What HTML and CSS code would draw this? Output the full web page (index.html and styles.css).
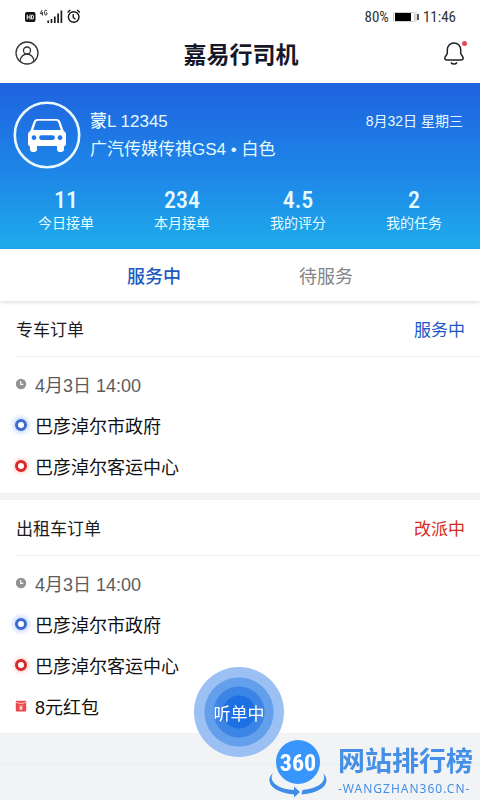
FILE: index.html
```html
<!DOCTYPE html>
<html lang="zh-CN">
<head>
<meta charset="utf-8">
<meta name="viewport" content="width=device-width, initial-scale=1">
<title>嘉易行司机</title>
<link rel="stylesheet" href="styles.css">
</head>
<body>
<svg class="defs" aria-hidden="true">
  <symbol id="clock" viewBox="0 0 12 12"><circle cx="6" cy="6" r="5.2" fill="#929294"/><path d="M5.7 3v3.4h2.6" fill="none" stroke="#fff" stroke-width="1.1"/></symbol>
  <symbol id="packet" viewBox="0 0 12 12"><rect x=".8" y=".8" width="10.400" height="10.700" rx="1" fill="#ea4a4f"/><path d="M1 2.500Q6 4.600 11 2.500" fill="none" stroke="#ffc9c4" stroke-width=".9"/><path d="M4.400 5.200l1.600 1.600 1.600-1.600M6 6.800v3.400M4.400 7.300h3.200M4.400 8.800h3.200" fill="none" stroke="#ffe9e5" stroke-width=".9"/></symbol>
</svg>
<div class="statusbar">
  <svg class="signals" width="57" height="18" viewBox="0 0 57 18" aria-hidden="true">
    <rect x="1" y="4" width="10.500" height="10" rx="2" fill="#111"/>
    <path d="M3.200 6.600v5M6 6.600v5M3.200 9.100H6M7.600 7.100h.6q1.300 0 1.300 1.200v1.500q0 1.300-1.300 1.300h-.6z" fill="none" stroke="#fff" stroke-width="1"/>
    <path d="M18 2l-1.700 3.600h2.800M18.400 4v3.500M23 3q-.4-.8-1.200-.8-1.200 0-1.200 1.400v2q0 1.400 1.200 1.400T23 5.800V5h-1.200" fill="none" stroke="#333" stroke-width="1"/>
    <path d="M24.200 12.500v2.500M27.500 11v4M30.800 8.500v6.500M34.100 5.500v9.500M37.400 2.500v12.500" stroke="#1c1c1c" stroke-width="1.700"/>
    <circle cx="49.700" cy="9" r="5.300" fill="none" stroke="#111" stroke-width="1.400"/>
    <path d="M49.200 6v3.400l2.300 1.800M43.500 4.500l2.800-2.500M53.100 2l2.800 2.500" fill="none" stroke="#111" stroke-width="1.300"/>
  </svg>
  <div class="power">
    <span>80%</span>
    <svg width="26" height="10" viewBox="0 0 26 10" aria-hidden="true"><rect x=".5" y=".5" width="21" height="9" rx="1" fill="#fff" stroke="#ccc"/><rect x="2" y="1" width="16" height="8" fill="#000"/><path d="M23 .5v9" stroke="#bbb"/><path d="M25 2v6" stroke="#222" stroke-width="1.500"/></svg>
    <span>11:46</span>
  </div>
</div>
<header class="appbar">
  <button class="icon" type="button" aria-label="个人中心">
    <svg width="24" height="24" viewBox="0 0 24 24" fill="none" stroke="#333" stroke-width="1.300"><circle cx="12" cy="12" r="11"/><circle cx="12" cy="9.500" r="3.500"/><path d="M5 20.200c.4-4.200 3.400-7.200 7-7.200s6.600 3 7 7.200"/></svg>
  </button>
  <h1>嘉易行司机</h1>
  <button class="icon" type="button" aria-label="消息">
    <svg width="24" height="24" viewBox="0 2 24 24" fill="none" stroke="#222" stroke-width="1.500"><path d="M11 4c-4 0-6.700 2.900-6.700 6.700v3.200c0 2-2.500 3.100-2.500 5.200 0 1.200.8 2 2.200 2h14c1.400 0 2.200-.8 2.200-2 0-2.100-2.500-3.200-2.500-5.200v-3.200C17.700 6.900 15 4 11 4z"/><path d="M8 23.500c1.500 2.100 4.500 2.100 6 0"/><circle cx="21.500" cy="4.500" r="2.500" fill="#e34858" stroke="none"/></svg>
  </button>
</header>
<section class="hero">
  <div class="driver">
    <svg class="avatar" width="68" height="68" viewBox="0 0 68 68" aria-hidden="true">
      <circle cx="34" cy="34" r="32.200" fill="none" stroke="#e9f9ff" stroke-width="2.600"/>
      <path fill="#fff" fill-rule="evenodd" d="M24.500 18h19q3 0 4 3l3 8.500q2.500 1.500 2.500 5v8.500q0 2-2 2.400v3.200q0 2.400-2.400 2.400h-2.200q-2.400 0-2.400-2.400V45H24v3.600q0 2.400-2.400 2.400h-2.200q-2.400 0-2.400-2.400v-3.200q-2-.4-2-2.400v-8.500q0-3.500 2.500-5l3-8.500q1-3 4-3zM25 19.800q-1.800 0-2.400 1.900L20.300 29h27.400l-2.300-7.300q-.6-1.900-2.400-1.900zM21 34.200a2.400 2.400 0 1 0 .01 0zM47 34.200a2.400 2.400 0 1 0 .01 0zM28.500 34.200a2.400 2.400 0 0 0 0 4.800h11a2.400 2.400 0 0 0 0-4.800z"/>
    </svg>
    <div class="info">
      <div class="line"><strong class="plate">蒙L 12345</strong><time>8月32日 星期三</time></div>
      <div class="model">广汽传媒传祺GS4 • 白色</div>
    </div>
  </div>
  <dl class="stats">
    <div><dd>11</dd><dt>今日接单</dt></div>
    <div><dd>234</dd><dt>本月接单</dt></div>
    <div><dd>4.5</dd><dt>我的评分</dt></div>
    <div><dd>2</dd><dt>我的任务</dt></div>
  </dl>
</section>
<nav class="tabs">
  <button type="button" class="active">服务中</button>
  <button type="button">待服务</button>
</nav>
<main>
  <article class="order">
    <header><h2>专车订单</h2><span class="serving">服务中</span></header>
    <ul>
      <li class="when"><svg width="12" height="12" aria-hidden="true"><use href="#clock"/></svg>4月3日 14:00</li>
      <li><i class="dot from"></i>巴彦淖尔市政府</li>
      <li><i class="dot to"></i>巴彦淖尔客运中心</li>
    </ul>
  </article>
  <article class="order">
    <header><h2>出租车订单</h2><span class="changing">改派中</span></header>
    <ul>
      <li class="when"><svg width="12" height="12" aria-hidden="true"><use href="#clock"/></svg>4月3日 14:00</li>
      <li><i class="dot from"></i>巴彦淖尔市政府</li>
      <li><i class="dot to"></i>巴彦淖尔客运中心</li>
      <li><svg width="12" height="12" aria-hidden="true"><use href="#packet"/></svg>8元红包</li>
    </ul>
  </article>
</main>
<div class="list-end"></div>
<button class="listen" type="button">听单中</button>
<div class="brand">
  <svg width="60" height="60" viewBox="0 0 60 60" aria-hidden="true">
    <circle cx="30" cy="22" r="22" fill="#3795fb"/>
    <text x="30" y="31" text-anchor="middle" class="brand-num">360</text>
    <path d="M5 33C-4 41 4 53 26 54.500v3L32 52l-6-5.500v3.500C9 49 0 41 5 33z" fill="#3d8ee8"/>
    <path d="M55 33c4 7-2 15-20.500 17l-1 4.500C55 53 64 42 55 33z" fill="#3d8ee8"/>
  </svg>
  <div class="brand-text"><div class="brand-name">网站排行榜</div><div class="brand-url">-WANGZHAN360.CN-</div></div>
</div>
</body>
</html>
```

FILE: styles.css
```css
* { box-sizing: border-box; }
body {
  margin: 0;
  min-height: 100vh;
  background: #f1f3f5;
  color: #1c1c20;
  font-family: "Liberation Sans", "Noto Sans CJK SC", sans-serif;
}
button { border: 0; padding: 0; background: none; font: inherit; color: inherit; }
h1, h2, dl, dd, ul { margin: 0; padding: 0; }
.defs { display: none; }

.statusbar {
  display: flex;
  justify-content: space-between;
  align-items: center;
  height: 33px;
  padding: 0 24px;
  background: #fff;
}
.power {
  display: flex;
  align-items: center;
  gap: 4px;
  color: #333;
  font-family: "Roboto Condensed", "Liberation Sans Narrow", Roboto, sans-serif;
  font-size: 15px;
}

.appbar {
  display: flex;
  justify-content: space-between;
  align-items: flex-start;
  height: 50px;
  padding: 8px 13px 0 15px;
  background: #fff;
}
.appbar h1 { font-size: 23px; font-weight: 700; line-height: 28px; color: #16182a; }
.icon { display: flex; }

.hero {
  padding: 18px 8px 0;
  height: 166px;
  background: linear-gradient(#1f62df, #1e87e8 55%, #1eabeb);
  color: #e6fbff;
}
.driver { display: flex; gap: 9px; padding: 0 9px 0 5px; }
.avatar { flex: none; }
.info { flex: 1; padding-top: 7px; font-size: 17px; line-height: 28px; }
.line { display: flex; justify-content: space-between; }
.plate { font-weight: 500; }
.line time { font-size: 14px; line-height: 26px; }
.stats { display: grid; grid-template-columns: repeat(4, 1fr); margin-top: 18px; text-align: center; }
.stats div { display: flex; flex-direction: column; }
.stats dd { font: 500 24px/26px "Roboto Condensed", "Liberation Sans Narrow", sans-serif; }
.stats dt { font-size: 14px; line-height: 20px; }

.tabs {
  position: relative;
  display: grid;
  grid-template-columns: 1fr 1fr;
  height: 52px;
  padding: 0 68px;
  background: #fff;
  box-shadow: 0 1px 4px rgba(0, 0, 0, .16);
  font-size: 18px;
  color: #838387;
}
.tabs .active { color: #2159c0; font-weight: 500; }

main { display: grid; gap: 7px; }
.order { background: #fff; }
.order header {
  display: flex;
  justify-content: space-between;
  align-items: center;
  height: 56px;
  margin-left: 16px;
  padding-right: 15px;
  border-bottom: 1px solid #f2f2f3;
  font-size: 17px;
}
.order h2 { font-size: 17px; font-weight: 400; }
.serving { color: #1c58c4; }
.changing { color: #d42a20; }
.order ul { padding: 6px 15px 7px; list-style: none; font-size: 18px; }
.order li { display: flex; align-items: center; gap: 8px; height: 41px; color: #111; }
.order .when { color: #5c5c5e; }
.dot { width: 12px; height: 12px; border: 3px solid; border-radius: 50%; background: #fff; }
.from { border-color: #3c6bd0; box-shadow: 0 0 5px 2px #c3d6ff; }
.to { border-color: #d9272a; box-shadow: 0 0 4px 1px #ffc4c0; }
.list-end { height: 32px; border-bottom: 1px solid #eceef0; }

.listen {
  position: fixed;
  left: calc(50% - 46px);
  bottom: 43px;
  width: 90px;
  height: 90px;
  border-radius: 50%;
  background: radial-gradient(circle, #1c70e2 0 16px, #3c85e7 17px 25px, #649fec 26px 34px, #9bc0f3 35px);
  color: #fff;
  font-size: 17px;
}

.brand { position: fixed; right: 7px; bottom: 0; display: flex; gap: 10px; color: #4590e6; }
.brand-num { font: bold 24px "Roboto Condensed", "Liberation Sans Narrow", sans-serif; fill: #fff; }
.brand-name { font: bold 27px/40px "Noto Sans CJK SC", sans-serif; }
.brand-url { font: 12px/18px "Noto Sans", sans-serif; letter-spacing: 1px; }
```
